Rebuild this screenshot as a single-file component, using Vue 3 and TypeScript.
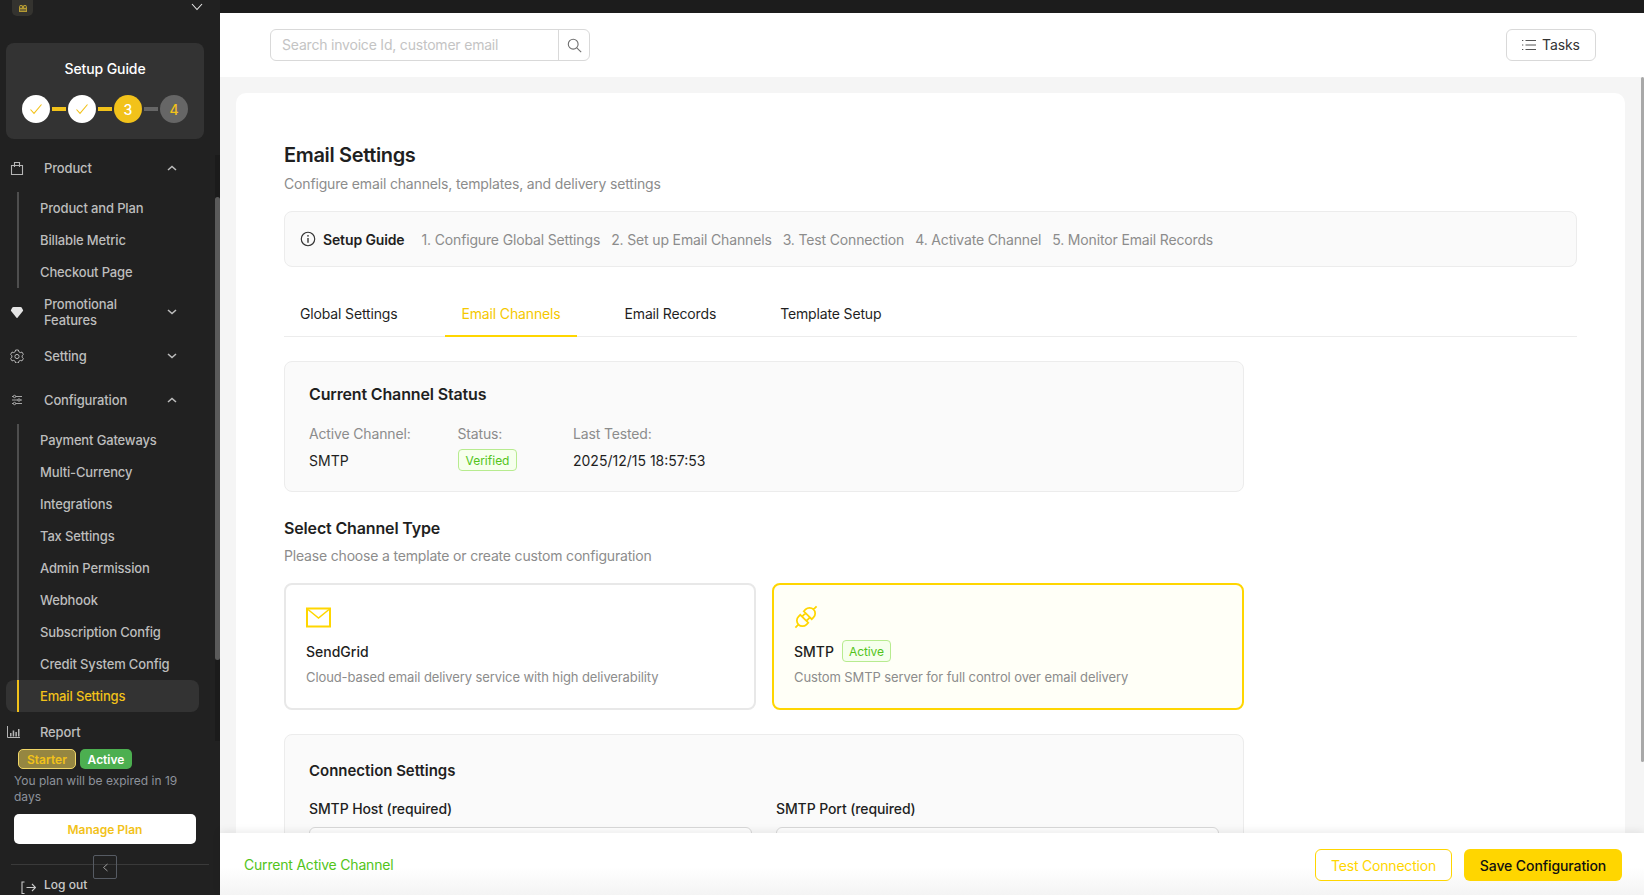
<script setup lang="ts">
interface SubItem { label: string; active?: boolean }
const productItems: SubItem[] = [
  { label: 'Product and Plan' },
  { label: 'Billable Metric' },
  { label: 'Checkout Page' },
]
const configItems: SubItem[] = [
  { label: 'Payment Gateways' },
  { label: 'Multi-Currency' },
  { label: 'Integrations' },
  { label: 'Tax Settings' },
  { label: 'Admin Permission' },
  { label: 'Webhook' },
  { label: 'Subscription Config' },
  { label: 'Credit System Config' },
  { label: 'Email Settings', active: true },
]
const steps = [
  '1. Configure Global Settings',
  '2. Set up Email Channels',
  '3. Test Connection',
  '4. Activate Channel',
  '5. Monitor Email Records',
]
const tabs = ['Global Settings', 'Email Channels', 'Email Records', 'Template Setup']
</script>

<template>
  <div class="app">
    <aside class="sidebar">
      <div class="brand">
        <div class="logo">
          <svg width="10" height="9" viewBox="0 0 10 9"><path d="M1 8V3l1-2h2l1 1 1-1h2l1 2v5z" fill="#b59a32"/><circle cx="3" cy="3" r="1" fill="#3a3a36"/><circle cx="7" cy="3" r="1" fill="#3a3a36"/><path d="M2 6h6" stroke="#3a3a36"/></svg>
        </div>
        <svg class="brand-chev" width="12" height="8" viewBox="0 0 12 8"><path d="M1 1l5 5.5L11 1" fill="none" stroke="#e8e8e8" stroke-width="1.1"/></svg>
      </div>

      <div class="guide-card">
        <div class="guide-title">Setup Guide</div>
        <div class="guide-steps">
          <span class="dot dot-done"><svg width="14" height="12" viewBox="0 0 14 12"><path d="M1.5 6.5l3.5 3.8L12.5 1.5" fill="none" stroke="#f2c21a" stroke-width="1.1"/></svg></span>
          <span class="link"></span>
          <span class="dot dot-done"><svg width="14" height="12" viewBox="0 0 14 12"><path d="M1.5 6.5l3.5 3.8L12.5 1.5" fill="none" stroke="#f2c21a" stroke-width="1.1"/></svg></span>
          <span class="link"></span>
          <span class="dot dot-now">3</span>
          <span class="link link-off"></span>
          <span class="dot dot-next">4</span>
        </div>
      </div>

      <nav class="nav">
        <div class="nav-row nav-product">
          <svg class="nav-icon" width="14" height="14" viewBox="0 0 14 14"><path d="M1.5 4.5h11v9h-11zM4.5 6V1.500h5V6" fill="none" stroke="#b5b5b5" stroke-width="1.1"/></svg>
          <span class="nav-label">Product</span>
          <svg class="nav-chev" width="10" height="6" viewBox="0 0 10 6"><path d="M1 5l4-3.6L9 5" fill="none" stroke="#bdbdbd" stroke-width="1.5"/></svg>
        </div>
        <ul class="sub">
          <li v-for="it in productItems" :key="it.label" class="sub-item">{{ it.label }}</li>
        </ul>
        <div class="nav-row nav-promo">
          <svg class="nav-icon" width="14" height="14" viewBox="0 0 14 14"><path d="M3.500 2h7c.5 0 1 .2 1.300.7L13 5c.2.400.1.800-.1 1.100L7.500 12.700c-.3.300-.7.300-1 0L1.100 6.100C.9 5.800.8 5.400 1 5l1.200-2.300C2.500 2.200 3 2 3.500 2z" fill="#e4e4e4"/></svg>
          <span class="nav-label">Promotional<br />Features</span>
          <svg class="nav-chev" width="10" height="6" viewBox="0 0 10 6"><path d="M1 1l4 3.6L9 1" fill="none" stroke="#bdbdbd" stroke-width="1.5"/></svg>
        </div>
        <div class="nav-row nav-setting">
          <svg class="nav-icon" width="14" height="14" viewBox="0 0 14 14"><path d="M5.600 1h2.800l.4 1.700 1.500.9 1.700-.5 1.400 2.400-1.300 1.200v1.600l1.300 1.200-1.400 2.400-1.700-.5-1.500.9-.4 1.700H5.600l-.4-1.700-1.500-.9-1.700.5L.6 9.500l1.300-1.200V6.700L.6 5.500 2 3.100l1.700.5 1.500-.9z" fill="none" stroke="#b5b5b5" stroke-width="1"/><circle cx="7" cy="7.500" r="2.100" fill="none" stroke="#b5b5b5"/></svg>
          <span class="nav-label">Setting</span>
          <svg class="nav-chev" width="10" height="6" viewBox="0 0 10 6"><path d="M1 1l4 3.6L9 1" fill="none" stroke="#bdbdbd" stroke-width="1.5"/></svg>
        </div>
        <div class="nav-row nav-config">
          <svg class="nav-icon" width="12" height="12" viewBox="0 0 12 12"><g fill="none" stroke="#b5b5b5" stroke-width=".9"><path d="M1 2.500h10M1 6h10M1 9.500h10"/><circle cx="3.500" cy="2.500" r="1.200" fill="#212121"/><circle cx="8" cy="6" r="1.200" fill="#212121"/><circle cx="3.500" cy="9.500" r="1.200" fill="#212121"/></g></svg>
          <span class="nav-label">Configuration</span>
          <svg class="nav-chev" width="10" height="6" viewBox="0 0 10 6"><path d="M1 5l4-3.6L9 5" fill="none" stroke="#bdbdbd" stroke-width="1.5"/></svg>
        </div>
        <ul class="sub">
          <li v-for="it in configItems" :key="it.label" class="sub-item" :class="{ 'sub-active': it.active }">{{ it.label }}</li>
        </ul>
        <div class="nav-report">
          <svg class="report-icon" width="13" height="12" viewBox="0 0 13 12"><path d="M.5 0v11.500H13" fill="none" stroke="#b5b5b5"/><path d="M3 7h1.500v3.500H3zM5.700 4.500h1.500v6H5.700zM8.400 6h1.500v4.500H8.400zM11 3h1.500v7.500H11z" fill="#b5b5b5"/></svg>
          <span>Report</span>
        </div>
      </nav>

      <div class="plan">
        <div class="plan-badges">
          <span class="badge badge-starter">Starter</span>
          <span class="badge badge-active">Active</span>
        </div>
        <p class="plan-text">You plan will be expired in 19 days</p>
        <button class="manage">Manage Plan</button>
      </div>

      <div class="side-foot">
        <button class="collapse"><svg width="7" height="9" viewBox="0 0 7 9"><path d="M5.500 1L1.500 4.500l4 3.500" fill="none" stroke="#9a9a9a"/></svg></button>
        <div class="logout">
          <svg width="15" height="13" viewBox="0 0 15 13"><path d="M3.500 1H1v11.500h2.500M5.500 6.500h9M11 3l3.500 3.500L11 10" fill="none" stroke="#c9c9c9" stroke-width="1.1"/></svg>
          <span>Log out</span>
        </div>
      </div>
      <div class="side-track"><div class="side-thumb"></div></div>
    </aside>

    <main class="main">
      <div class="topstrip"></div>
      <header class="topbar">
        <div class="search">
          <span class="search-input">Search invoice Id, customer email</span>
          <span class="search-btn"><svg width="15" height="15" viewBox="0 0 15 15"><circle cx="6.200" cy="6.200" r="4.900" fill="none" stroke="#6f6f6f" stroke-width="1.100"/><path d="M9.800 9.800l4.400 4.400" stroke="#6f6f6f" stroke-width="1.100"/></svg></span>
        </div>
        <button class="tasks">
          <svg width="14" height="12" viewBox="0 0 14 12"><g stroke="#555" stroke-width="1"><path d="M3.500 1.500H14M3.500 6H14M3.500 10.500H14"/><path d="M0 1.500h1.300M0 6h1.300M0 10.500h1.300"/></g></svg>
          Tasks
        </button>
      </header>

      <div class="content">
        <section class="card">
          <h1 class="title">Email Settings</h1>
          <p class="subtitle">Configure email channels, templates, and delivery settings</p>

          <div class="guide-bar">
            <svg width="16" height="16" viewBox="0 0 15 15"><circle cx="7.500" cy="7.500" r="6.300" fill="none" stroke="#333" stroke-width="1.100"/><path d="M7.500 6.500v4.500" stroke="#333" stroke-width="1.300"/><circle cx="7.500" cy="4.500" r=".8" fill="#333"/></svg>
            <strong class="guide-strong">Setup Guide</strong>
            <span v-for="s in steps" :key="s" class="guide-step">{{ s }}</span>
          </div>

          <div class="tabs">
            <div v-for="t in tabs" :key="t" class="tab" :class="{ 'tab-active': t === 'Email Channels' }">{{ t }}</div>
          </div>

          <div class="column">
            <div class="panel status">
              <h2 class="h2">Current Channel Status</h2>
              <div class="status-cols">
                <div class="col col-a">
                  <div class="label">Active Channel:</div>
                  <div class="value">SMTP</div>
                </div>
                <div class="col col-b">
                  <div class="label">Status:</div>
                  <div class="value"><span class="tag">Verified</span></div>
                </div>
                <div class="col">
                  <div class="label">Last Tested:</div>
                  <div class="value">2025/12/15 18:57:53</div>
                </div>
              </div>
            </div>

            <h2 class="h2 select-title">Select Channel Type</h2>
            <p class="select-sub">Please choose a template or create custom configuration</p>

            <div class="channels">
              <div class="channel">
                <svg class="ch-icon" width="25" height="20" viewBox="0 0 25 20"><path d="M1 1h23v18H1z" fill="none" stroke="#ffd600" stroke-width="2"/><path d="M2 2l10.500 8.500L23 2" fill="none" stroke="#ffd600" stroke-width="1.500"/></svg>
                <div class="ch-name">SendGrid</div>
                <div class="ch-desc">Cloud-based email delivery service with high deliverability</div>
              </div>
              <div class="channel channel-on">
                <svg class="ch-icon" width="24" height="24" viewBox="0 0 24 24"><g transform="rotate(-45 12 12) translate(12 12) scale(1.25) translate(-12 -12)" fill="none" stroke="#ffd600" stroke-width="1.400"><path d="M0 12h3M8 7.500a4.500 4.500 0 0 0 0 9h2v-9zM10 9.500h4M10 14.500h4M14 7.500h2a4.500 4.500 0 0 1 0 9h-2zM20.500 12H24"/></g></svg>
                <div class="ch-name">SMTP <span class="tag tag-sm">Active</span></div>
                <div class="ch-desc">Custom SMTP server for full control over email delivery</div>
              </div>
            </div>

            <div class="panel conn">
              <h2 class="h2 conn-title">Connection Settings</h2>
              <div class="fields">
                <div class="field"><label class="f-label">SMTP Host (required)</label><div class="f-input"></div></div>
                <div class="field"><label class="f-label">SMTP Port (required)</label><div class="f-input"></div></div>
              </div>
            </div>
          </div>
        </section>
        <div class="page-thumb"></div>
      </div>

      <footer class="footer">
        <span class="current">Current Active Channel</span>
        <div class="actions">
          <button class="btn-outline">Test Connection</button>
          <button class="btn-solid">Save Configuration</button>
        </div>
      </footer>
    </main>
  </div>
</template>

<style>
html, body { margin: 0; padding: 0; overflow: hidden; }
</style>

<style scoped>
* { box-sizing: border-box; }
.app {
  display: flex;
  width: 1644px;
  height: 895px;
  overflow: hidden;
  font-family: Inter, "Noto Sans", sans-serif;
  background: #f5f5f5;
}
.sidebar {
  position: relative;
  flex: 0 0 220px;
  height: 895px;
  overflow: hidden;
  background: #212121;
  color: #c4c4c4;
}
.brand {
  display: flex;
  justify-content: space-between;
  align-items: flex-start;
  height: 43px;
  padding: 0 17px 0 12px;
}
.logo {
  display: flex;
  align-items: flex-end;
  justify-content: center;
  width: 21px;
  height: 16px;
  padding-bottom: 3px;
  border-radius: 0 0 5px 5px;
  background: #34332f;
}
.brand-chev { margin-top: 3px; }
.guide-card {
  width: 198px;
  height: 96px;
  margin-left: 6px;
  padding-top: 17px;
  border-radius: 8px;
  background: #333;
}
.guide-title {
  color: #fff;
  font-size: 14px;
  font-weight: 500;
  letter-spacing: -.1px;
  line-height: 18px;
  text-align: center;
}
.guide-steps {
  display: flex;
  align-items: center;
  justify-content: center;
  margin-top: 17px;
}
.dot {
  display: flex;
  align-items: center;
  justify-content: center;
  width: 28px;
  height: 28px;
  border-radius: 50%;
  font-size: 14px;
  font-weight: 500;
}
.dot-done { background: #fff; }
.dot-now { background: #f2c21a; color: #fff; }
.dot-next { background: #666; color: #f2c21a; }
.link { width: 14px; height: 4px; margin: 0 2px; background: #f2c21a; }
.link-off { background: #666; }
.nav { padding-top: 12px; }
.nav-row {
  display: flex;
  align-items: center;
  position: relative;
  padding-left: 44px;
  font-size: 13px;
  font-weight: 500;
  letter-spacing: -.15px;
  color: #bdbdbd;
}
.nav-icon { position: absolute; left: 10px; }
.nav-chev { position: absolute; left: 167px; }
.nav-label { line-height: 16px; }
.nav-product { height: 34px; }
.nav-promo { height: 48px; }
.nav-setting { height: 40px; }
.nav-config { height: 44px; margin-top: 2px; }
.nav-config .nav-icon { left: 11px; }
.sub {
  list-style: none;
  margin: 0;
  padding: 0 0 0 17px;
  position: relative;
}
.sub::before {
  content: "";
  position: absolute;
  left: 17px;
  top: 0;
  bottom: 0;
  width: 2px;
  background: #4e4e4e;
}
.sub-item {
  position: relative;
  height: 32px;
  padding-left: 23px;
  color: #bdbdbd;
  font-size: 13px;
  font-weight: 500;
  letter-spacing: -.15px;
  line-height: 32px;
}
.nav-product + .sub { margin-top: 7px; }
.nav-config + .sub { margin-top: 2px; }
.sub-active {
  margin-left: -11px;
  width: 193px;
  padding-left: 34px;
  border-radius: 8px;
  background: #333;
  color: #f2c21a;
}
.sub-active::before {
  content: "";
  position: absolute;
  left: 11px;
  top: 0;
  bottom: 0;
  width: 2px;
  background: #f2c21a;
}
.nav-report {
  position: relative;
  display: flex;
  align-items: center;
  height: 40px;
  padding-left: 40px;
  color: #bdbdbd;
  font-size: 13px;
  font-weight: 500;
  letter-spacing: -.15px;
}
.report-icon { position: absolute; left: 7px; }
.plan { padding: 0 24px 0 14px; margin-top: -3px; }
.plan-badges { display: flex; gap: 4px; padding-left: 4px; }
.badge {
  display: flex;
  align-items: center;
  justify-content: center;
  height: 20px;
  border-radius: 5px;
  font-size: 12px;
  font-weight: 600;
}
.badge-starter {
  width: 58px;
  border: 1px solid #f0d668;
  background: #958641;
  color: #f2c21a;
}
.badge-active { width: 52px; background: #4caf50; color: #fff; }
.plan-text {
  margin: 4px 0 0;
  color: #8d929b;
  font-size: 12px;
  line-height: 16px;
}
.manage {
  display: block;
  width: 182px;
  height: 30px;
  margin-top: 9px;
  border: none;
  border-radius: 5px;
  background: #fff;
  color: #f2c21a;
  font-family: inherit;
  font-size: 12px;
  font-weight: 600;
}
.side-foot { position: relative; margin: 20px 11px 0; border-top: 1px solid #3a3a3a; }
.collapse {
  position: absolute;
  left: 82px;
  top: -10px;
  display: flex;
  align-items: center;
  justify-content: center;
  width: 24px;
  height: 24px;
  padding: 0;
  border: 1px solid #565b63;
  border-radius: 2px;
  background: transparent;
}
.logout {
  display: flex;
  align-items: center;
  margin-top: 11px;
  padding-left: 10px;
  gap: 8px;
  color: #c9c9c9;
  font-size: 12px;
  font-weight: 500;
  line-height: 16px;
}
.logout svg { margin-top: 5px; }
.side-track {
  position: absolute;
  left: 215px;
  top: 155px;
  width: 5px;
  height: 586px;
  background: #1b1b1b;
}
.side-thumb {
  position: absolute;
  top: 42px;
  left: 0;
  width: 5px;
  height: 463px;
  background: #5a5a5a;
  border-radius: 3px;
}
.main {
  display: flex;
  flex: 1;
  flex-direction: column;
  min-width: 0;
  height: 895px;
}
.topstrip { flex: 0 0 13px; background: #1c1c1c; }
.topbar {
  display: flex;
  flex: 0 0 64px;
  align-items: center;
  justify-content: space-between;
  padding: 0 48px 0 50px;
  background: #fff;
}
.search {
  display: flex;
  width: 320px;
  height: 32px;
  border: 1px solid #d9d9d9;
  border-radius: 6px;
}
.search-input {
  flex: 1;
  padding-left: 11px;
  color: #c4c4c4;
  font-size: 14px;
  letter-spacing: -.2px;
  line-height: 30px;
}
.search-btn {
  display: flex;
  align-items: center;
  justify-content: center;
  width: 31px;
  border-left: 1px solid #d9d9d9;
}
.tasks {
  display: flex;
  align-items: center;
  justify-content: center;
  gap: 6px;
  width: 90px;
  height: 32px;
  padding-left: 6px;
  border: 1px solid #d9d9d9;
  border-radius: 6px;
  background: #fff;
  color: #333;
  font-family: inherit;
  font-size: 14px;
  letter-spacing: -.1px;
  line-height: 28px;
}
.content {
  position: relative;
  flex: 1;
  min-height: 0;
  overflow: hidden;
  padding: 16px 19px 0 16px;
  background: #f5f5f5;
}
.page-thumb {
  position: absolute;
  right: 0;
  top: 0;
  width: 3px;
  height: 685px;
  background: #a8a8a8;
  border-radius: 2px;
}
.card {
  min-height: 900px;
  padding: 48px 48px 0;
  border-radius: 10px;
  background: #fff;
}
.title {
  margin: 0;
  color: #1f1f1f;
  font-size: 20px;
  font-weight: 600;
  letter-spacing: -.35px;
  line-height: 28px;
}
.subtitle {
  margin: 4px 0 0;
  color: #8c8c8c;
  font-size: 14px;
  letter-spacing: -.16px;
  line-height: 22px;
}
.guide-bar {
  display: flex;
  align-items: center;
  height: 56px;
  margin-top: 16px;
  padding-left: 15px;
  border: 1px solid #ececec;
  border-radius: 8px;
  background: #fafafa;
}
.guide-strong {
  margin: 0 17px 0 7px;
  color: #1f1f1f;
  font-size: 14px;
  font-weight: 600;
  letter-spacing: -.13px;
}
.guide-step { margin-right: 11px; color: #8c8c8c; font-size: 14px; letter-spacing: -.15px; }
.tabs {
  display: flex;
  gap: 32px;
  height: 70px;
  padding-top: 24px;
  border-bottom: 1px solid #ececec;
}
.tab {
  height: 46px;
  padding: 0 16px;
  color: #1f1f1f;
  font-size: 14px;
  letter-spacing: -.15px;
  line-height: 46px;
}
.tab-active { border-bottom: 2px solid #ffd600; color: #f5c800; }
.column { width: 960px; padding-top: 24px; }
.panel {
  padding: 23px 24px;
  border: 1px solid #ececec;
  border-radius: 8px;
  background: #fafafa;
}
.status { height: 131px; }
.h2 {
  margin: 0;
  color: #1f1f1f;
  font-size: 16px;
  font-weight: 600;
  letter-spacing: -.15px;
  line-height: 18px;
}
.conn-title { font-size: 15px; letter-spacing: -.03px; }
.status-cols { display: flex; margin-top: 21px; }
.col-a { width: 148.500px; }
.col-b { width: 115.500px; }
.label { color: #8c8c8c; font-size: 14px; letter-spacing: -.15px; line-height: 20px; }
.value {
  display: flex;
  align-items: center;
  height: 28px;
  margin-top: 2px;
  color: #1f1f1f;
  font-size: 14px;
}
.tag {
  display: inline-flex;
  align-items: center;
  height: 22px;
  padding: 0 7px;
  border: 1px solid #b7eb8f;
  border-radius: 4px;
  background: #f6ffed;
  color: #52c41a;
  font-size: 12px;
}
.tag-sm { margin-left: 8px; padding: 0 6px; font-weight: 400; letter-spacing: -.1px; }
.select-title { margin-top: 27px; }
.select-sub {
  margin: 8px 0 0;
  color: #8c8c8c;
  font-size: 14px;
  letter-spacing: -.18px;
  line-height: 22px;
}
.channels { display: flex; gap: 16px; margin-top: 16px; }
.channel {
  flex: 1;
  height: 127px;
  padding: 21px 20px 0;
  border: 2px solid #e8e8e8;
  border-radius: 8px;
  background: #fff;
}
.channel-on { border-color: #ffd600; background: #fffff7; padding-top: 20px; }
.ch-icon { display: block; height: 23px; }
.channel-on .ch-icon { height: 24px; }
.ch-name {
  display: flex;
  align-items: center;
  height: 22px;
  margin-top: 11px;
  color: #1f1f1f;
  font-size: 14px;
  font-weight: 500;
}
.channel-on .ch-name { margin-top: 11px; }
.ch-desc {
  margin-top: 5px;
  color: #8c8c8c;
  font-size: 13px;
  letter-spacing: -.1px;
  line-height: 20px;
}
.conn { margin-top: 24px; height: 200px; padding-top: 27px; }
.fields { display: flex; gap: 24px; margin-top: 19px; }
.field { flex: 1; }
.f-label { display: block; color: #1f1f1f; font-size: 14px; font-weight: 500; letter-spacing: -.1px; line-height: 20px; }
.f-input {
  height: 32px;
  margin-top: 8px;
  border: 1px solid #d9d9d9;
  border-radius: 6px;
  background: #fff;
}
.footer {
  position: relative;
  display: flex;
  flex: 0 0 62px;
  align-items: center;
  justify-content: space-between;
  padding: 0 22px 0 24px;
  background: linear-gradient(#fff 55%, #f4f4f4);
  box-shadow: 0 -2px 8px rgba(0, 0, 0, .08);
}
.current { color: #52c41a; font-size: 14px; letter-spacing: -.2px; }
.actions { display: flex; gap: 12px; margin-top: 2px; }
.btn-outline, .btn-solid {
  height: 32px;
  border-radius: 6px;
  font-family: inherit;
  font-size: 14px;
}
.btn-outline {
  width: 137px;
  border: 1px solid #ffd600;
  background: #fff;
  color: #ffd600;
  letter-spacing: -.2px;
}
.btn-solid {
  width: 158px;
  border: none;
  background: #ffd600;
  color: #111;
  font-weight: 500;
  letter-spacing: -.1px;
}
</style>
